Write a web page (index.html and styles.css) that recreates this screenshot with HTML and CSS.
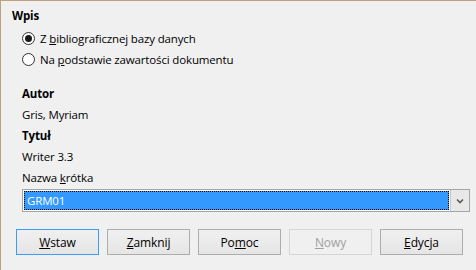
FILE: index.html
```html
<!DOCTYPE html>
<html lang="pl">
<head>
<meta charset="utf-8">
<link rel="stylesheet" href="styles.css">
</head>
<body>
<div class="dialog">
  <div class="heading">Wpis</div>
  <div class="radios">
    <label class="radio"><span class="dot checked"></span><span>Z <u>b</u>ibliograficznej bazy danych</span></label>
    <label class="radio"><span class="dot"></span><span>Na <u>p</u>odstawie zawartości dokumentu</span></label>
  </div>
  <div class="fields">
    <div class="line bold">Autor</div>
    <div class="line">Gris, Myriam</div>
    <div class="line bold">Tytuł</div>
    <div class="line">Writer 3.3</div>
    <div class="line">Nazwa <u>k</u>rótka</div>
    <div class="combo">
      <div class="combo-value"><span>GRM01</span></div>
      <div class="combo-btn">
        <svg width="8" height="6" viewBox="0 0 8 6"><path d="M1 1.5 L4 4.5 L7 1.5" fill="none" stroke="#5a5a5a" stroke-width="1.6"/></svg>
      </div>
    </div>
  </div>
  <div class="buttons">
    <button class="btn default"><u>W</u>staw</button>
    <button class="btn"><u>Z</u>amknij</button>
    <button class="btn">Po<u>m</u>oc</button>
    <button class="btn disabled"><u>N</u>owy</button>
    <button class="btn"><u>E</u>dycja</button>
  </div>
</div>
</body>
</html>
```
FILE: styles.css
```css
html, body {
  margin: 0;
  padding: 0;
  width: 476px;
  height: 270px;
  overflow: hidden;
  background: #f0f0f0;
}
body {
  font-family: "Open Sans", "Noto Sans", sans-serif;
  font-size: 11.5px;
  letter-spacing: -0.15px;
  color: #000;
}
.dialog {
  box-sizing: border-box;
  width: 476px;
  height: 270px;
  border-top: 1px solid #bfa07a;
  border-left: 1px solid #bfa07a;
  padding: 4px 0 0 11px;
}
.heading {
  font-weight: bold;
  height: 21px;
  line-height: 21px;
}
.radios {
  padding-left: 10px;
  padding-top: 2px;
}
.radio {
  display: flex;
  align-items: center;
  gap: 5px;
  height: 21px;
  line-height: 21px;
}
.dot {
  box-sizing: border-box;
  width: 13px;
  height: 13px;
  border-radius: 50%;
  border: 1px solid #333;
  background: #fff;
  position: relative;
}
.dot.checked::after {
  content: "";
  position: absolute;
  left: 2px;
  top: 2px;
  width: 7px;
  height: 7px;
  border-radius: 50%;
  background: #1a1a1a;
}
.fields {
  padding-left: 10px;
  padding-top: 13px;
}
.line {
  height: 21px;
  line-height: 21px;
}
.bold { font-weight: bold; }
.combo {
  margin-top: 1px;
  box-sizing: border-box;
  width: 448px;
  height: 23px;
  border: 1px solid #a5a5a5;
  display: flex;
  background: #fff;
}
.combo-value {
  flex: 1;
  padding: 1px;
  background: #fff;
}
.combo-value span {
  display: block;
  box-sizing: border-box;
  height: 19px;
  line-height: 17px;
  background: #3399ff;
  color: #fff;
  outline: 1px dotted #000;
  outline-offset: -1px;
  border: 1px dotted #fff;
  padding-left: 2px;
}
.combo-btn {
  width: 18px;
  background: #e8e8e8;
  border-left: 1px solid #c8c8c8;
  display: flex;
  align-items: center;
  justify-content: center;
}
.buttons {
  display: flex;
  gap: 8px;
  margin-top: 17px;
  margin-left: 4px;
}
.btn {
  box-sizing: border-box;
  width: 83px;
  height: 26px;
  font-family: inherit;
  font-size: 12px;
  letter-spacing: -0.1px;
  color: #000;
  border: 1px solid #adadad;
  background: linear-gradient(#f0f0f0, #e5e5e5);
  padding: 0;
}
.btn.default {
  border-color: #3c9bff;
}
.btn.disabled {
  color: #a0a0a0;
  border-color: #d5d5d5;
  background: #f0f0f0;
}
```
